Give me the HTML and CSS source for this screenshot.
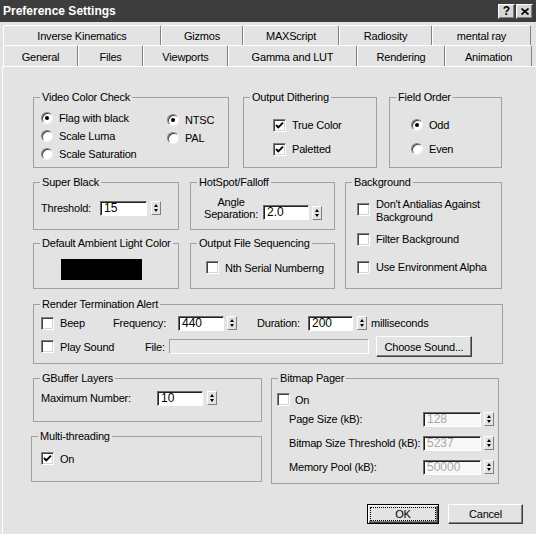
FILE: index.html
```html
<!DOCTYPE html>
<html>
<head>
<meta charset="utf-8">
<title>Preference Settings</title>
<link rel="stylesheet" href="styles.css">
</head>
<body>
<div class="window">
  <div class="titlebar">
    <span class="title">Preference Settings</span>
    <span class="tbtns">
      <span class="tbtn">?</span>
      <span class="tbtn"><svg width="8" height="7" viewBox="0 0 8 7"><path d="M0.5 0.5L7.5 6.5M7.5 0.5L0.5 6.5" stroke="#000" stroke-width="1.6"/></svg></span>
    </span>
  </div>

  <div class="tabs">
    <div class="tabrow r1">
      <div class="tab">Inverse Kinematics</div>
      <div class="tab">Gizmos</div>
      <div class="tab">MAXScript</div>
      <div class="tab">Radiosity</div>
      <div class="tab">mental ray</div>
    </div>
    <div class="tabrow r2">
      <div class="tab">General</div>
      <div class="tab">Files</div>
      <div class="tab">Viewports</div>
      <div class="tab">Gamma and LUT</div>
      <div class="tab active">Rendering</div>
      <div class="tab">Animation</div>
    </div>
  </div>

  <div class="panel">
    <div class="row-a">
      <div class="group vcc">
        <div class="gt">Video Color Check</div>
        <div class="vcc-body">
          <div class="vcc-c1">
            <div class="opt h18"><span class="rd on"></span>Flag with black</div>
            <div class="opt h18"><span class="rd"></span>Scale Luma</div>
            <div class="opt h18"><span class="rd"></span>Scale Saturation</div>
          </div>
          <div class="vcc-c2">
            <div class="opt h18"><span class="rd on"></span>NTSC</div>
            <div class="opt h18"><span class="rd"></span>PAL</div>
          </div>
        </div>
      </div>
      <div class="group dither">
        <div class="gt">Output Dithering</div>
        <div class="dith-body">
          <div class="opt h24"><span class="cb"><svg width="9" height="9" viewBox="0 0 9 9"><path d="M1 4l2.3 2.4L8 1.6" stroke="#000" stroke-width="1.9" fill="none"/></svg></span>True Color</div>
          <div class="opt h24"><span class="cb"><svg width="9" height="9" viewBox="0 0 9 9"><path d="M1 4l2.3 2.4L8 1.6" stroke="#000" stroke-width="1.9" fill="none"/></svg></span>Paletted</div>
        </div>
      </div>
      <div class="group field">
        <div class="gt">Field Order</div>
        <div class="fo-body">
          <div class="opt h24"><span class="rd on"></span>Odd</div>
          <div class="opt h24"><span class="rd"></span>Even</div>
        </div>
      </div>
    </div>

    <div class="row-b">
      <div class="col col-sb">
        <div class="group superblack">
          <div class="gt">Super Black</div>
          <div class="frow sb-row">
            <span class="lbl-th">Threshold:</span>
            <span class="inp w47">15</span>
            <span class="spin"></span>
          </div>
        </div>
        <div class="group ambient">
          <div class="gt">Default Ambient Light Color</div>
          <div class="swatch"></div>
        </div>
      </div>
      <div class="col col-hs">
        <div class="group hotspot">
          <div class="gt">HotSpot/Falloff</div>
          <div class="hs-row">
            <div class="hs-lbl">Angle<br>Separation:</div>
            <span class="inp w46">2.0</span>
            <span class="spin s3"></span>
          </div>
        </div>
        <div class="group fileseq">
          <div class="gt">Output File Sequencing</div>
          <div class="opt fs-row"><span class="cb"></span>Nth Serial Numberng</div>
        </div>
      </div>
      <div class="group bg">
        <div class="gt">Background</div>
        <div class="bg-body">
          <div class="opt h28"><span class="cb up"></span><span class="l13">Don't Antialias Against<br>Background</span></div>
          <div class="opt h28"><span class="cb"></span>Filter Background</div>
          <div class="opt h28"><span class="cb"></span>Use Environment Alpha</div>
        </div>
      </div>
    </div>

    <div class="row-c">
      <div class="group rta">
        <div class="gt">Render Termination Alert</div>
        <div class="frow rta-r1">
          <div class="opt c-beep"><span class="cb"></span>Beep</div>
          <span class="lbl-freq">Frequency:</span>
          <span class="inp w46">440</span>
          <span class="spin s3"></span>
          <span class="lbl-dur">Duration:</span>
          <span class="inp w45">200</span>
          <span class="spin"></span>
          <span class="ms">milliseconds</span>
        </div>
        <div class="frow rta-r2">
          <div class="opt c-play"><span class="cb"></span>Play Sound</div>
          <span class="lbl-file">File:</span>
          <span class="inp-file"></span>
          <span class="btn btn-choose">Choose Sound...</span>
        </div>
      </div>
    </div>

    <div class="row-d">
      <div class="col col-gb">
        <div class="group gbuf">
          <div class="gt">GBuffer Layers</div>
          <div class="frow gb-row">
            <span class="lbl-max">Maximum Number:</span>
            <span class="inp w46">10</span>
            <span class="spin"></span>
          </div>
        </div>
        <div class="group mt">
          <div class="gt">Multi-threading</div>
          <div class="opt mt-row"><span class="cb"><svg width="9" height="9" viewBox="0 0 9 9"><path d="M1 4l2.3 2.4L8 1.6" stroke="#000" stroke-width="1.9" fill="none"/></svg></span>On</div>
        </div>
      </div>
      <div class="group bmp">
        <div class="gt">Bitmap Pager</div>
        <div class="opt bmp-on"><span class="cb"></span>On</div>
        <div class="bmp-rows">
          <div class="frow h24"><span class="lbl-bmp">Page Size (kB):</span><span class="inp w58 dis">128</span><span class="spin s3"></span></div>
          <div class="frow h24"><span class="lbl-bmp">Bitmap Size Threshold (kB):</span><span class="inp w58 dis">5237</span><span class="spin s3"></span></div>
          <div class="frow h24"><span class="lbl-bmp">Memory Pool (kB):</span><span class="inp w58 dis">50000</span><span class="spin s3"></span></div>
        </div>
      </div>
    </div>

    <div class="actions">
      <span class="btn ok"><span class="focus">OK</span></span>
      <span class="btn cancel">Cancel</span>
    </div>
  </div>
</div>
</body>
</html>
```

FILE: styles.css
```css
* { box-sizing: border-box; }
html, body { margin: 0; padding: 0; }
body {
  background: #e3e3e3;
  font-family: "Liberation Sans", Arial, sans-serif;
  font-size: 11px;
  letter-spacing: -0.2px;
  color: #000;
}
.window {
  width: 536px;
  height: 534px;
  display: flex;
  flex-direction: column;
  overflow: hidden;
}

/* title bar */
.titlebar {
  height: 22px;
  flex: none;
  background: #3d3d3d;
  display: flex;
  align-items: center;
  padding: 0 3px 0 3px;
}
.title {
  color: #fff;
  font-weight: bold;
  font-size: 12px;
  letter-spacing: 0;
}
.tbtns { margin-left: auto; display: flex; gap: 1px; }
.tbtn {
  width: 17px;
  height: 15px;
  background: #d6d6d6;
  border: 1px solid;
  border-color: #fff #404040 #404040 #fff;
  box-shadow: inset -1px -1px 0 #808080;
  display: flex;
  align-items: center;
  justify-content: center;
  font-weight: bold;
  font-size: 12px;
  letter-spacing: 0;
  color: #000;
}

/* tabs */
.tabs { margin: 3px 0 0 3px; flex: none; }
.tabrow { display: flex; }
.tabrow.r1 { height: 20px; }
.tabrow.r2 { height: 21px; }
.tab {
  border-top: 1px solid #fff;
  border-left: 1px solid #fff;
  border-right: 1px solid #808080;
  border-radius: 2px 2px 0 0;
  display: flex;
  align-items: center;
  justify-content: center;
  white-space: nowrap;
}
.r2 .tab { padding-top: 2px; }
.r1 .tab:nth-child(1) { width: 158px; }
.r1 .tab:nth-child(2) { width: 82px; }
.r1 .tab:nth-child(3) { width: 96px; }
.r1 .tab:nth-child(4) { width: 93px; }
.r1 .tab:nth-child(5) { width: 99px; }
.r2 .tab:nth-child(1) { width: 75px; }
.r2 .tab:nth-child(2) { width: 65px; }
.r2 .tab:nth-child(3) { width: 85px; }
.r2 .tab:nth-child(4) { width: 129px; }
.r2 .tab:nth-child(5) { width: 88px; }
.r2 .tab:nth-child(6) { width: 87px; }

/* panel */
.panel {
  flex: 1;
  margin-left: 2px;
  border-top: 1px solid #fff;
  border-left: 1px solid #fff;
  padding: 30px 0 0 30px;
}

/* group boxes */
.group { border: 1px solid #a0a0a0; }
.gt {
  display: table;
  margin: -7px 0 0 6px;
  padding: 0 2px;
  background: #e3e3e3;
  line-height: 13px;
  white-space: nowrap;
}

.opt { display: flex; align-items: center; gap: 6px; white-space: nowrap; }
.h18 { height: 18px; }
.h24 { height: 24px; }
.h28 { height: 28px; }
.frow { display: flex; align-items: center; white-space: nowrap; }
.l13 { line-height: 13px; }

/* controls */
.rd {
  width: 12px;
  height: 12px;
  flex: none;
  border-radius: 50%;
  background: #fff;
  border: 1px solid;
  border-color: #808080 #f4f4f4 #f4f4f4 #808080;
  box-shadow: inset 1px 1px 0 #404040;
  display: flex;
  align-items: center;
  justify-content: center;
}
.rd.on::after {
  content: "";
  width: 4px;
  height: 4px;
  border-radius: 50%;
  background: #000;
}
.cb {
  width: 13px;
  height: 13px;
  flex: none;
  background: #fff;
  border: 1px solid;
  border-color: #808080 #fff #fff #808080;
  box-shadow: inset 1px 1px 0 #404040, inset -1px -1px 0 #d4d4d4;
  display: flex;
  align-items: center;
  justify-content: center;
}
.cb svg { display: block; }
.cb.up { margin-bottom: 4px; }

.inp {
  height: 15px;
  background: #fff;
  border: 1px solid;
  border-color: #6a6a6a #fff #fff #6a6a6a;
  box-shadow: inset 1px 1px 0 #202020;
  padding: 0 0 0 3px;
  line-height: 13px;
  font-size: 12px;
  letter-spacing: 0;
  flex: none;
}
.inp.dis { color: #a8a8a8; background: #f8f8f8; }
.w45 { width: 45px; }
.w46 { width: 46px; }
.w47 { width: 47px; }
.w58 { width: 58px; }
.inp-file {
  width: 200px;
  height: 15px;
  background: #e6e6e6;
  border: 1px solid;
  border-color: #a0a0a0 #fff #fff #a0a0a0;
}
.spin {
  width: 10px;
  height: 14px;
  flex: none;
  margin-left: 4px;
  background: #e3e3e3;
  border: 1px solid;
  border-color: #fff #808080 #808080 #fff;
  display: flex;
  flex-direction: column;
  align-items: center;
  justify-content: center;
  gap: 2px;
}
.spin.s3 { margin-left: 3px; }
.spin::before {
  content: "";
  border-left: 2.5px solid transparent;
  border-right: 2.5px solid transparent;
  border-bottom: 3px solid #000;
}
.spin::after {
  content: "";
  border-left: 2.5px solid transparent;
  border-right: 2.5px solid transparent;
  border-top: 3px solid #000;
}

.btn {
  height: 20px;
  background: #e3e3e3;
  border: 1px solid;
  border-color: #fff #404040 #404040 #fff;
  box-shadow: inset -1px -1px 0 #808080;
  display: flex;
  align-items: center;
  justify-content: center;
  white-space: nowrap;
  flex: none;
}

/* row A */
.row-a { display: flex; height: 71px; }
.vcc { width: 196px; }
.dither { width: 134px; margin-left: 14px; }
.field { width: 113px; margin-left: 12px; }
.vcc-body { display: flex; padding: 5px 0 0 7px; }
.vcc-c1 { width: 126px; }
.vcc-c2 { padding-top: 2px; }
.dith-body { padding: 9px 0 0 29px; }
.fo-body { padding: 9px 0 0 21px; }

/* row B */
.row-b { display: flex; margin-top: 14px; align-items: flex-start; }
.col { display: flex; flex-direction: column; }
.col-sb { width: 146px; gap: 13px; }
.col-hs { width: 145px; gap: 13px; margin-left: 11px; }
.superblack, .hotspot { height: 48px; }
.ambient, .fileseq { height: 46px; }
.bg { width: 157px; height: 107px; margin-left: 10px; }
.sb-row { height: 16px; margin: 11px 0 0 7px; }
.lbl-th { width: 59px; }
.hs-row { display: flex; align-items: flex-end; margin: 7px 0 0 13px; }
.hs-lbl { text-align: center; line-height: 12px; margin-right: 5px; white-space: nowrap; }
.swatch { width: 81px; height: 21px; background: #000; margin: 9px 0 0 27px; }
.fs-row { height: 13px; margin: 11px 0 0 15px; }
.bg-body { padding: 8px 0 0 11px; }

/* row C */
.row-c { margin-top: 15px; }
.rta { width: 470px; height: 60px; }
.rta-r1 { height: 16px; margin: 4px 0 0 7px; }
.c-beep { width: 72px; }
.lbl-freq { width: 65px; }
.lbl-dur { width: 51px; margin-left: 20px; }
.ms { margin-left: 4px; }
.rta-r2 { height: 21px; margin: 5px 0 0 7px; }
.c-play { width: 104px; }
.lbl-file { width: 24px; }
.btn-choose { width: 96px; height: 21px; margin-left: 7px; }

/* row D */
.row-d { display: flex; margin-top: 14px; align-items: flex-start; }
.col-gb { width: 229px; gap: 14px; }
.gbuf { height: 44px; }
.mt { height: 46px; width: 231px; margin-left: -2px; }
.gb-row { height: 16px; margin: 5px 0 0 7px; }
.lbl-max { width: 116px; }
.mt-row { height: 13px; margin: 9px 0 0 9px; }
.bmp { width: 228px; height: 106px; margin-left: 9px; }
.bmp-on { height: 13px; margin: 8px 0 0 5px; gap: 5px; }
.bmp-rows { margin: 1px 0 0 17px; }
.lbl-bmp { width: 134px; }

/* buttons */
.actions { display: flex; gap: 9px; margin: 20px 0 0 334px; }
.ok {
  width: 72px;
  border: 1px solid #000;
  box-shadow: inset 1px 1px 0 #fff, inset -1px -1px 0 #404040, inset -2px -2px 0 #808080;
  padding: 2px;
}
.ok .focus {
  flex: 1;
  align-self: stretch;
  border: 1px dotted #000;
  display: flex;
  align-items: center;
  justify-content: center;
}
.cancel { width: 75px; }
```
